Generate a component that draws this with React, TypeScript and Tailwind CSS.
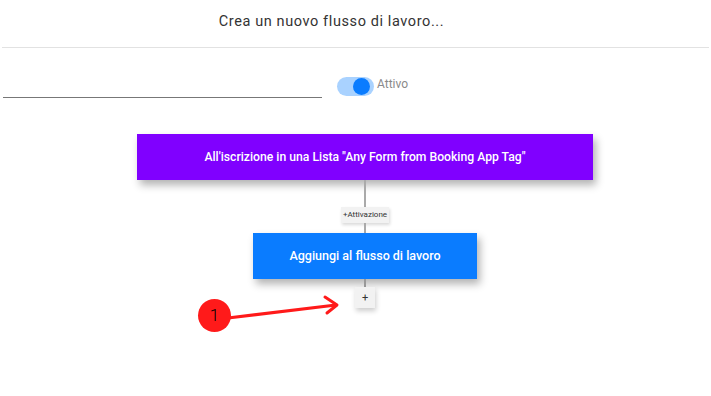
export default function App() {
  return (
    <div className="relative w-[711px] h-[396px] bg-white overflow-hidden font-['Roboto',sans-serif]">
      {/* Header */}
      <div className="mx-[2px] h-[48px] border-b border-[#e2e2e2] flex items-center justify-center">
        <h1 className="text-[14.5px] font-normal text-[#333] tracking-[0.6px] pr-[48px] -mt-[3px]">
          Crea un nuovo flusso di lavoro...
        </h1>
      </div>

      {/* Name + toggle */}
      <div className="flex items-start pt-[29px]">
        <div className="ml-[3px] w-[319px] h-[21px] border-b border-[#777]" />
        <div className="ml-[15px] flex items-start">
          <div className="relative w-[37px] h-[19px] rounded-full bg-[#a9d2ff]">
            <div className="absolute right-[4px] top-[1px] w-[17px] h-[17px] rounded-full bg-[#0a7cff]" />
          </div>
          <span className="ml-[3px] text-[12px] text-[#8a8a8a] leading-none mt-[1px]">Attivo</span>
        </div>
      </div>

      {/* Workflow */}
      <div className="flex flex-col items-center pl-[19px] pt-[36px]">
        <div className="w-[456px] h-[46px] bg-[#8000ff] flex items-center justify-center shadow-[3px_5px_8px_rgba(0,0,0,0.3)]">
          <span className="text-[12.2px] text-white font-medium">
            All'iscrizione in una Lista "Any Form from Booking App Tag"
          </span>
        </div>
        <div className="w-[2px] h-[27px] bg-[#aaa]" />
        <div className="h-[16px] px-[2px] bg-[#f2f2f2] shadow-[1px_2px_3px_rgba(0,0,0,0.15)] flex items-center">
          <span className="text-[8px] text-[#333] leading-none">+Attivazione</span>
        </div>
        <div className="w-[2px] h-[10px] bg-[#aaa]" />
        <div className="w-[224px] h-[46px] bg-[#0a7cff] flex items-center justify-center shadow-[3px_5px_8px_rgba(0,0,0,0.3)]">
          <span className="text-[12.5px] text-white font-medium">Aggiungi al flusso di lavoro</span>
        </div>
        <div className="w-[2px] h-[8px] bg-[#999]" />
        <div className="w-[20px] h-[21px] bg-[#f2f2f2] shadow-[1px_3px_5px_rgba(0,0,0,0.2)] flex items-center justify-center">
          <span className="text-[11px] text-[#333] leading-none">+</span>
        </div>
      </div>

      {/* Annotation */}
      <svg className="absolute left-0 top-0 pointer-events-none" width="711" height="396">
        <line x1="228" y1="318" x2="336" y2="305" stroke="#ff1a1a" strokeWidth="3" />
        <polyline points="325,297 337,305 327,313" fill="none" stroke="#ff1a1a" strokeWidth="3" strokeLinecap="round" strokeLinejoin="round" />
      </svg>
      <div className="absolute left-[198px] top-[299px] w-[33px] h-[33px] rounded-full bg-[#ff1a1a] flex items-center justify-center">
        <span className="text-[17px] font-light text-black leading-none">1</span>
      </div>
    </div>
  );
}
